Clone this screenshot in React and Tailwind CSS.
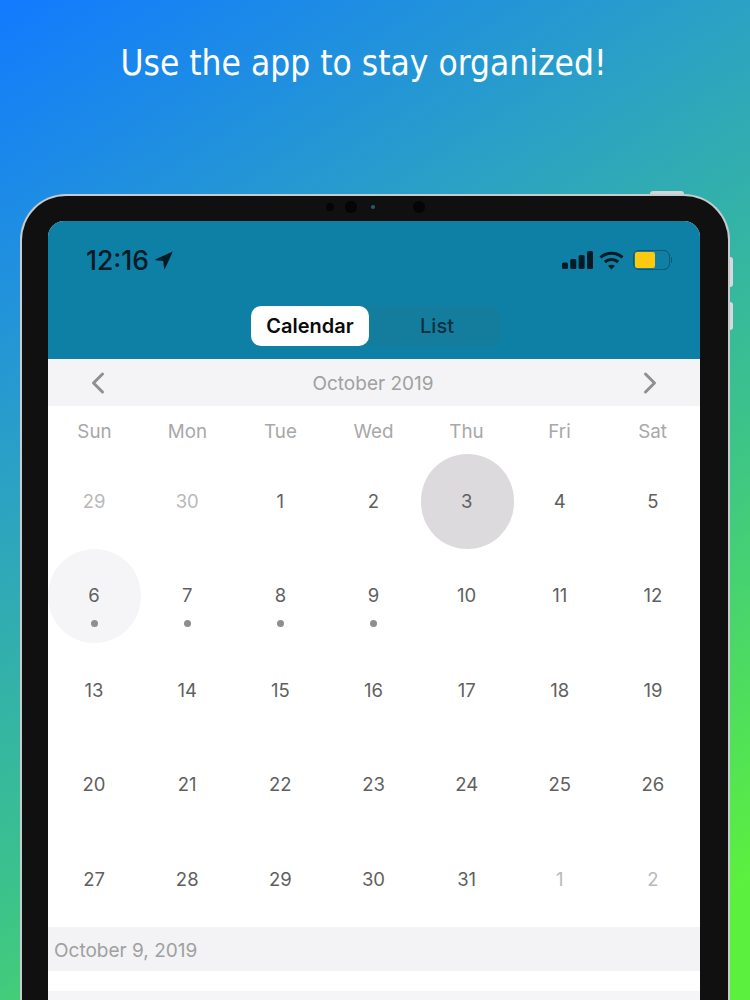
import { ChevronLeft, ChevronRight } from 'lucide-react'

const weekDays = ['Sun', 'Mon', 'Tue', 'Wed', 'Thu', 'Fri', 'Sat']

const days = [
  { n: 29, muted: true },
  { n: 30, muted: true },
  { n: 1 },
  { n: 2 },
  { n: 3, selected: true },
  { n: 4 },
  { n: 5 },
  { n: 6, today: true, dot: true },
  { n: 7, dot: true },
  { n: 8, dot: true },
  { n: 9, dot: true },
  ...[10, 11, 12, 13, 14, 15, 16, 17, 18, 19, 20, 21, 22, 23, 24, 25, 26, 27, 28, 29, 30, 31].map((n) => ({ n })),
  { n: 1, muted: true },
  { n: 2, muted: true },
]

const StatusBar = () => (
  <div className="flex h-[54px] items-end justify-between pl-[38px] pr-[30px]">
    <div className="flex items-center gap-[6px] text-[#041a24]">
      <span className="text-[26.500px] leading-[30px] font-medium">12:16</span>
      <svg width="18" height="18" viewBox="0 0 18 18" fill="currentColor">
        <path d="M17.800.6.600 8.200c-.5.3-.4 1 .2 1.100l7.500.6.700 7.400c.1.600.8.700 1.100.2z" />
      </svg>
    </div>
    <div className="flex items-center gap-[6px] pb-[5px] text-[#041a24]">
      <svg width="31" height="18" viewBox="0 0 31 18" fill="currentColor">
        <rect x="0" y="11.500" width="6" height="6.500" rx="1.500" />
        <rect x="8.300" y="8" width="6" height="10" rx="1.500" />
        <rect x="16.600" y="4" width="6" height="14" rx="1.500" />
        <rect x="25" y="0" width="6" height="18" rx="1.500" />
      </svg>
      <svg width="25" height="19" viewBox="0 0 25 19" fill="none" stroke="currentColor" strokeWidth="3">
        <path d="M1.500 6.500c6.300-5.600 15.700-5.600 22 0" />
        <path d="M5.800 11c3.900-3.400 9.500-3.400 13.400 0" />
        <path d="M12.500 18.500l-3.500-3.800c2-1.400 5-1.400 7 0z" fill="currentColor" stroke="none" />
      </svg>
      <div className="relative ml-[3px] flex h-[20px] w-[37px] items-center rounded-[6px] border border-[#0d5674] p-[1px]">
        <div className="h-full w-[20px] rounded-[2px] bg-[#fdc90f]" />
        <div className="absolute -right-[3px] top-[6px] h-[6px] w-[1.500px] rounded-r-sm bg-[#0d5674]" />
      </div>
    </div>
  </div>
)

const Tabs = () => (
  <div className="mt-[31px] flex pl-[203px]">
    <div className="flex h-[40px] w-[249px] rounded-[10px] bg-[#147d9d]">
      <div className="flex w-[118px] items-center justify-center rounded-[10px] bg-white text-[20px] font-semibold text-[#0b0b0b]">
        Calendar
      </div>
      <div className="flex flex-1 items-center justify-center pl-[5px] text-[20px] font-medium text-[#08303f]">
        List
      </div>
    </div>
  </div>
)

const DayCell = ({ day }) => {
  let circle = ''
  if (day.selected) circle = 'bg-[#dcdadc]'
  if (day.today) circle = 'bg-[#f5f5f7]'
  return (
    <div className={`relative flex h-[94.500px] flex-col items-center justify-center rounded-full pb-[1px] ${circle}`}>
      <span className={`pr-[1px] text-[18.500px] leading-[24px] ${day.muted ? 'text-[#b9b9b9]' : 'text-[#5f5f5f]'}`}>
        {day.n}
      </span>
      {day.dot && <span className="absolute left-[43px] top-[71px] h-[7px] w-[7px] rounded-full bg-[#8e8e8e]" />}
    </div>
  )
}

const App = () => {
  return (
    <div className="h-[1000px] w-[750px] overflow-hidden bg-[linear-gradient(147deg,#127aff_0%,#2ba2c4_33%,#3cc38a_61%,#5cf03e_92%)] font-['Inter',sans-serif]">
      <h1 className="pt-[40px] pb-[108px] pr-[23px] text-center font-['DejaVu_Sans_Condensed','DejaVu_Sans',sans-serif] text-[35px] leading-[46px] text-white">
        Use the app to stay organized!
      </h1>

      <div className="relative ml-[20px] h-[900px] w-[710px] rounded-t-[46px] border-x-2 border-t-2 border-[#c6cbcd] bg-[#101010] pl-[26px] pr-[28px] pt-[25px]">
        {/* top and side hardware buttons */}
        <div className="absolute -top-[5px] left-[628px] h-[3px] w-[34px] rounded-t-sm bg-[#cfd6d8]" />
        <div className="absolute -right-[5px] top-[61px] h-[30px] w-[3px] rounded-r-sm bg-[#d5dbdc]" />
        <div className="absolute -right-[5px] top-[106px] h-[28px] w-[3px] rounded-r-sm bg-[#d5dbdc]" />

        {/* camera strip */}
        <div className="absolute left-[304px] top-[7px] h-[8px] w-[8px] rounded-full bg-[#050505]" />
        <div className="absolute left-[323px] top-[5px] h-[12px] w-[12px] rounded-full bg-[#050505]" />
        <div className="absolute left-[349px] top-[9px] h-[4px] w-[4px] rounded-full bg-[#1f5f6e]" />
        <div className="absolute left-[391px] top-[5px] h-[12px] w-[12px] rounded-full bg-[#050505]" />

        <div className="h-full overflow-hidden rounded-t-[16px] bg-[#f5f5f7]">
          <div className="h-[138px] bg-[#0e80a5]">
            <StatusBar />
            <Tabs />
          </div>

          <div className="flex h-[47px] items-center justify-between bg-[#f4f4f6] pl-[32px] pr-[32px] text-[#9a9a9a]">
            <ChevronLeft size={36} strokeWidth={2} className="text-[#8f8f8f]" />
            <span className="pt-[4px] pr-[2px] text-[19px] text-[#a0a0a0]">October 2019</span>
            <ChevronRight size={36} strokeWidth={2} className="text-[#8f8f8f]" />
          </div>

          <div className="bg-white">
            <div className="grid h-[48px] grid-cols-7 items-center pt-[4px] pr-[1px] text-center text-[18.800px] text-[#a8a8a8]">
              {weekDays.map((d) => (
                <span key={d}>{d}</span>
              ))}
            </div>

            <div className="grid grid-cols-7">
              {days.map((day, i) => (
                <DayCell key={i} day={day} />
              ))}
            </div>
          </div>

          <div className="flex h-[44px] items-center bg-[#f3f3f5] pl-[6px] pt-[6px] text-[19px] text-[#a0a0a0]">
            October 9, 2019
          </div>
          <div className="h-[20px] bg-white" />
        </div>
      </div>
    </div>
  )
}

export default App
